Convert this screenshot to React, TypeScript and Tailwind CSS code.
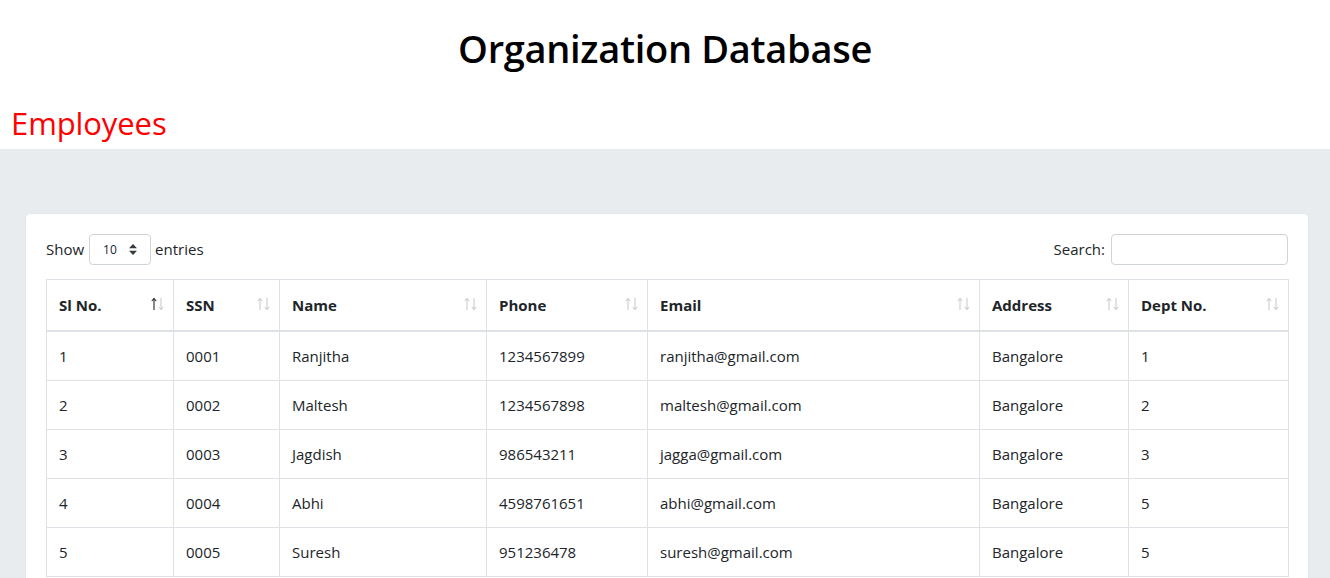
type Employee = { sl: number; ssn: string; name: string; phone: string; email: string; address: string; dept: number };

const employees: Employee[] = [
  { sl: 1, ssn: "0001", name: "Ranjitha", phone: "1234567899", email: "ranjitha@gmail.com", address: "Bangalore", dept: 1 },
  { sl: 2, ssn: "0002", name: "Maltesh", phone: "1234567898", email: "maltesh@gmail.com", address: "Bangalore", dept: 2 },
  { sl: 3, ssn: "0003", name: "Jagdish", phone: "986543211", email: "jagga@gmail.com", address: "Bangalore", dept: 3 },
  { sl: 4, ssn: "0004", name: "Abhi", phone: "4598761651", email: "abhi@gmail.com", address: "Bangalore", dept: 5 },
  { sl: 5, ssn: "0005", name: "Suresh", phone: "951236478", email: "suresh@gmail.com", address: "Bangalore", dept: 5 },
];

const columns = [
  { label: "Sl No.", width: "w-[127px]" },
  { label: "SSN", width: "w-[106px]" },
  { label: "Name", width: "w-[207px]" },
  { label: "Phone", width: "w-[161px]" },
  { label: "Email", width: "w-[332px]" },
  { label: "Address", width: "w-[149px]" },
  { label: "Dept No.", width: "w-[160px]" },
];

// datatables-style ↑↓ sort indicator
function SortArrows({ active }: { active?: boolean }) {
  return (
    <svg
      className="absolute right-[9px] top-[17px]"
      width="13"
      height="14"
      viewBox="0 0 13 14"
      fill="none"
      strokeWidth="1.1"
    >
      <g stroke={active ? "#212529" : "#c8ccd0"}>
        <path d="M3 1.5V13" />
        <path d="M0.8 4L3 1.5L5.2 4" />
      </g>
      <g stroke="#c8ccd0">
        <path d="M10 1V12.5" />
        <path d="M7.8 10L10 12.5L12.2 10" />
      </g>
    </svg>
  );
}

const cell = "border border-[#dee2e6] px-[12px] py-[12px] leading-6";

export default function App() {
  return (
    <div className="min-h-screen bg-[#e9ecef] font-['Open_Sans',sans-serif] text-[#212529]">
      <header className="bg-white h-[149px] flex flex-col">
        <h1 className="text-center text-[38px] leading-[48px] font-semibold pt-[24px] tracking-[-0.3px] text-black">Organization Database</h1>
        <h2 className="text-[31px] leading-[38px] text-[#ff0000] pl-[11px] mt-[32px] tracking-[-0.1px]">Employees</h2>
      </header>

      <main className="pt-[64px] pl-[25px] pr-[21px]">
        <div className="bg-white border border-[#e3e6ea] rounded-[5px] p-5">
          <div className="flex items-center justify-between h-[31px] text-[15px]">
            <div className="flex items-center gap-[4px]">
              <span>Show</span>
              <div className="ml-px w-[62px] h-[31px] border border-[#ced4da] rounded-[4px] flex items-center justify-between pl-[13px] pr-[13px]">
                <span className="text-[12px]">10</span>
                <svg width="8" height="11" viewBox="0 0 8 11" fill="#343a40">
                  <path d="M4 0L8 4.2H0Z" />
                  <path d="M4 11L8 6.8H0Z" />
                </svg>
              </div>
              <span>entries</span>
            </div>
            <div className="flex items-center gap-[6px]">
              <span>Search:</span>
              <div className="w-[177px] h-[31px] border border-[#ced4da] rounded-[4px]" />
            </div>
          </div>

          <table className="mt-[14px] w-full table-fixed border-collapse text-[15px]">
            <thead>
              <tr>
                {columns.map((c, i) => (
                  <th
                    key={c.label}
                    className={`${c.width} relative text-left font-bold border border-[#dee2e6] border-b-2 px-[12px] pt-[13px] pb-[13px] leading-6`}
                  >
                    {c.label}
                    <SortArrows active={i === 0} />
                  </th>
                ))}
              </tr>
            </thead>
            <tbody>
              {employees.map((e) => (
                <tr key={e.sl}>
                  <td className={cell}>{e.sl}</td>
                  <td className={cell}>{e.ssn}</td>
                  <td className={cell}>{e.name}</td>
                  <td className={cell}>{e.phone}</td>
                  <td className={cell}>{e.email}</td>
                  <td className={cell}>{e.address}</td>
                  <td className={cell}>{e.dept}</td>
                </tr>
              ))}
            </tbody>
          </table>
        </div>
      </main>
    </div>
  );
}
